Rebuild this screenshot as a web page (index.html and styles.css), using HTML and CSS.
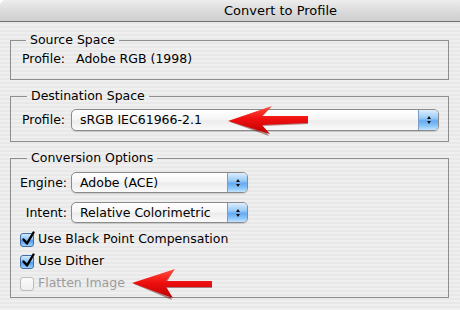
FILE: index.html
```html
<!DOCTYPE html>
<html>
<head>
<meta charset="utf-8">
<link rel="stylesheet" href="styles.css">
</head>
<body>
<div class="window">
  <div class="titlebar">Convert to Profile</div>
  <fieldset class="group g1">
    <legend>Source Space</legend>
    <div class="row"><span>Profile:</span><span class="val">Adobe RGB (1998)</span></div>
  </fieldset>
  <fieldset class="group g2">
    <legend>Destination Space</legend>
    <div class="row">
      <span class="lbl-p">Profile:</span>
      <div class="popup wide"><span class="popup-text">sRGB IEC61966-2.1</span><span class="popup-btn"><i class="up"></i><i class="down"></i></span></div>
    </div>
  </fieldset>
  <fieldset class="group g3">
    <legend>Conversion Options</legend>
    <div class="row sel-row">
      <span class="lbl">Engine:</span>
      <div class="popup short"><span class="popup-text">Adobe (ACE)</span><span class="popup-btn"><i class="up"></i><i class="down"></i></span></div>
    </div>
    <div class="row sel-row second">
      <span class="lbl">Intent:</span>
      <div class="popup short"><span class="popup-text">Relative Colorimetric</span><span class="popup-btn"><i class="up"></i><i class="down"></i></span></div>
    </div>
    <div class="checks">
      <div class="check"><span class="cb on"><svg class="tick" width="16" height="16" viewBox="0 0 16 16"><path d="M3.5 8.5 L7 12.5 L13.5 1.5" fill="none" stroke="#000" stroke-width="2.4" stroke-linecap="round" stroke-linejoin="round"/></svg></span><span>Use Black Point Compensation</span></div>
      <div class="check"><span class="cb on"><svg class="tick" width="16" height="16" viewBox="0 0 16 16"><path d="M3.5 8.5 L7 12.5 L13.5 1.5" fill="none" stroke="#000" stroke-width="2.4" stroke-linecap="round" stroke-linejoin="round"/></svg></span><span>Use Dither</span></div>
      <div class="check disabled"><span class="cb"></span><span>Flatten Image</span></div>
    </div>
  </fieldset>
  <svg class="arrows" width="460" height="310" viewBox="0 0 460 310">
    <defs>
      <linearGradient id="red1" x1="0" y1="0" x2="0" y2="1">
        <stop offset="0" stop-color="#ff5040"/>
        <stop offset="0.45" stop-color="#f01010"/>
        <stop offset="1" stop-color="#c00000"/>
      </linearGradient>
    </defs>
    <polygon points="230,122 271,107 262,117 308,117 308,124 262,126 269,136" fill="#5a0000" opacity="0.45"/>
    <polygon points="228,121 272,106 262,116 308,116 308,123 262,125 270,134" fill="url(#red1)"/>
    <polygon points="134,284 174,270 167,282 212,282 212,288 167,288 172,300" fill="#5a0000" opacity="0.45"/>
    <polygon points="132,283 175,269 166,281 212,281 212,287 166,287 173,298" fill="url(#red1)"/>
  </svg>
</div>
</body>
</html>
```
FILE: styles.css
```css
html, body {
  margin: 0;
  padding: 0;
  background: #ffffff;
}
body {
  width: 460px;
  height: 310px;
  overflow: hidden;
  font-family: "DejaVu Sans", "Liberation Sans", sans-serif;
  font-size: 12.5px;
  color: #000;
}
.window {
  position: relative;
  width: 460px;
  height: 310px;
  overflow: hidden;
  border-top-left-radius: 6px;
  background: repeating-linear-gradient(to bottom, #efefef 0 2px, #e8e8e8 2px 4px);
}
.titlebar {
  height: 21px;
  line-height: 21px;
  border-bottom: 1px solid #707070;
  background: linear-gradient(#ededed, #d9d9d9 60%, #cfcfcf);
  padding-left: 101px;
  text-align: center;
  font-size: 13px;
}
.group {
  box-sizing: border-box;
  width: 439px;
  margin: 8px 0 0 10px;
  border: 1px solid #8e8e8e;
  min-width: 0;
}
.group legend {
  padding: 0 4px;
  line-height: 16px;
  font-size: 12.5px;
}
.g1 {
  margin-top: 10px;
  padding: 3px 10px 12px 11px;
}
.g1 legend { margin-left: 4px; }
.g2 {
  padding: 5px 9px 10px 11px;
}
.g2 legend { margin-left: 5px; }
.g3 {
  padding: 6px 9px 3px 9px;
}
.g3 legend { margin-left: 7px; }
.row {
  display: flex;
  align-items: center;
  line-height: 16px;
}
.val { margin-left: 11px; }
.lbl-p { width: 49px; }
.lbl {
  width: 47px;
  margin-right: 4px;
  text-align: right;
}
.sel-row.second { margin-top: 9px; }
.popup {
  box-sizing: border-box;
  display: flex;
  align-items: center;
  height: 21px;
  border: 1px solid #8a8a8a;
  border-radius: 5px;
  overflow: hidden;
  background: linear-gradient(#ffffff, #f6f6f6 45%, #ececec 55%, #fafafa);
  box-shadow: 0 1px 1px rgba(0, 0, 0, 0.15);
}
.popup.wide { width: 368px; height: 22px; }
.popup.short { width: 177px; }
.popup-text {
  flex: 1;
  padding-left: 8px;
  white-space: nowrap;
}
.popup-btn {
  align-self: stretch;
  width: 19px;
  border-left: 1px solid #7d9cc4;
  background: linear-gradient(#dcedfd, #9ccbf6 40%, #66aaf0 55%, #8cc6fb 80%, #c4e4ff);
  display: flex;
  flex-direction: column;
  align-items: center;
  justify-content: center;
  gap: 2px;
}
.popup-btn i {
  display: block;
  width: 0;
  height: 0;
  border-left: 2.5px solid transparent;
  border-right: 2.5px solid transparent;
}
.popup-btn .up { border-bottom: 3px solid #111; }
.popup-btn .down { border-top: 3px solid #111; }
.checks {
  margin-top: 5px;
}
.check {
  display: flex;
  align-items: center;
  height: 22px;
  line-height: 22px;
  font-size: 12.5px;
}
.cb {
  position: relative;
  box-sizing: border-box;
  width: 14px;
  height: 14px;
  margin-top: 2px;
  margin-right: 4px;
  border: 1px solid #bcbcbc;
  border-radius: 3px;
  background: linear-gradient(#fbfbfb, #eeeeee);
}
.cb.on {
  border-color: #3f6ea6;
  background: linear-gradient(#d4eafe, #8fc3f4 45%, #4f9bec 55%, #9fd0fd);
}
.tick {
  position: absolute;
  left: -1px;
  top: -3px;
  overflow: visible;
}
.check.disabled { color: #9c9c9c; }
.arrows {
  position: absolute;
  left: 0;
  top: 0;
  pointer-events: none;
}
```
